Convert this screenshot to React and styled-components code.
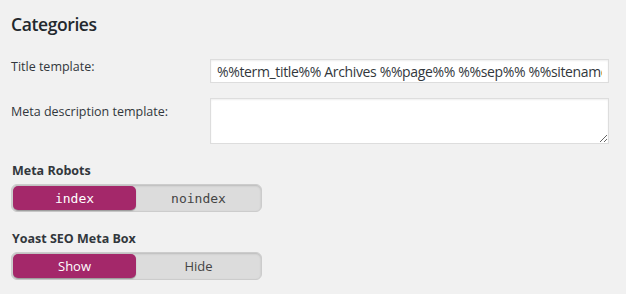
import React from 'react'
import styled, { createGlobalStyle } from 'styled-components'

const GlobalStyle = createGlobalStyle`
  body {
    margin: 0;
    background: #f1f1f1;
    font-family: "Open Sans", "Noto Sans", sans-serif;
    color: #23282d;
  }
`

const Page = styled.div`
  padding: 9px 11px 0 11px;
  width: 626px;
  height: 294px;
  box-sizing: border-box;
`

const Heading = styled.h2`
  margin: 0 0 20px;
  font-size: 17.5px;
  font-weight: 600;
  letter-spacing: -0.4px;
  line-height: 30px;
  color: #23282d;
`

const Row = styled.div`
  display: flex;
  align-items: flex-start;
  margin-bottom: ${p => p.$gap || 15}px;
`

const Label = styled.label`
  width: 199px;
  flex: none;
  font-size: 12.5px;
  line-height: 16px;
  padding-top: ${p => p.$top || 0}px;
  color: #32373c;
`

const TextInput = styled.input`
  width: 399px;
  height: 24px;
  box-sizing: border-box;
  border: 1px solid #ddd;
  box-shadow: inset 0 1px 2px rgba(0, 0, 0, 0.07);
  background: #fff;
  font-family: "Open Sans", "Noto Sans", sans-serif;
  font-size: 14px;
  letter-spacing: -0.35px;
  color: #32373c;
  padding: 0 6px;
  outline: none;
`

const TextArea = styled.textarea`
  width: 399px;
  height: 46px;
  box-sizing: border-box;
  border: 1px solid #ddd;
  box-shadow: inset 0 1px 2px rgba(0, 0, 0, 0.07);
  background: #fff;
  margin: 0;
  display: block;
  outline: none;
`

const FieldTitle = styled.div`
  font-size: 12.5px;
  font-weight: 700;
  line-height: 16px;
  margin: ${p => p.$top || 0}px 0 5px 1px;
  color: #32373c;
`

const Switch = styled.div`
  display: flex;
  width: 251px;
  height: 28px;
  box-sizing: border-box;
  padding: 1px;
  border: 1px solid #ccc;
  border-radius: 6px;
  background: #dcdcdc;
  box-shadow: inset 0 1px 2px rgba(0, 0, 0, 0.15);
`

const Option = styled.div`
  flex: none;
  width: ${p => (p.$active ? 123 : 125)}px;
  display: flex;
  align-items: center;
  justify-content: center;
  border-radius: 5px;
  font-family: ${p => (p.$mono ? '"DejaVu Sans Mono", "Liberation Mono", monospace' : '"Open Sans", "Noto Sans", sans-serif')};
  font-size: 13px;
  color: ${p => (p.$active ? '#fff' : '#444')};
  background: ${p => (p.$active ? '#a4286a' : 'transparent')};
  box-shadow: ${p => (p.$active ? '0 1px 1px rgba(0,0,0,0.3)' : 'none')};
`

export default function App() {
  return (
    <>
      <GlobalStyle />
      <Page>
        <Heading>Categories</Heading>
        <Row>
          <Label>Title template:</Label>
          <TextInput readOnly value="%%term_title%% Archives %%page%% %%sep%% %%sitename%%" />
        </Row>
        <Row $gap={19}>
          <Label $top={6}>Meta description template:</Label>
          <TextArea />
        </Row>
        <FieldTitle>Meta Robots</FieldTitle>
        <Switch>
          <Option $active $mono>index</Option>
          <Option $mono>noindex</Option>
        </Switch>
        <FieldTitle $top={19}>Yoast SEO Meta Box</FieldTitle>
        <Switch>
          <Option $active>Show</Option>
          <Option>Hide</Option>
        </Switch>
      </Page>
    </>
  )
}
